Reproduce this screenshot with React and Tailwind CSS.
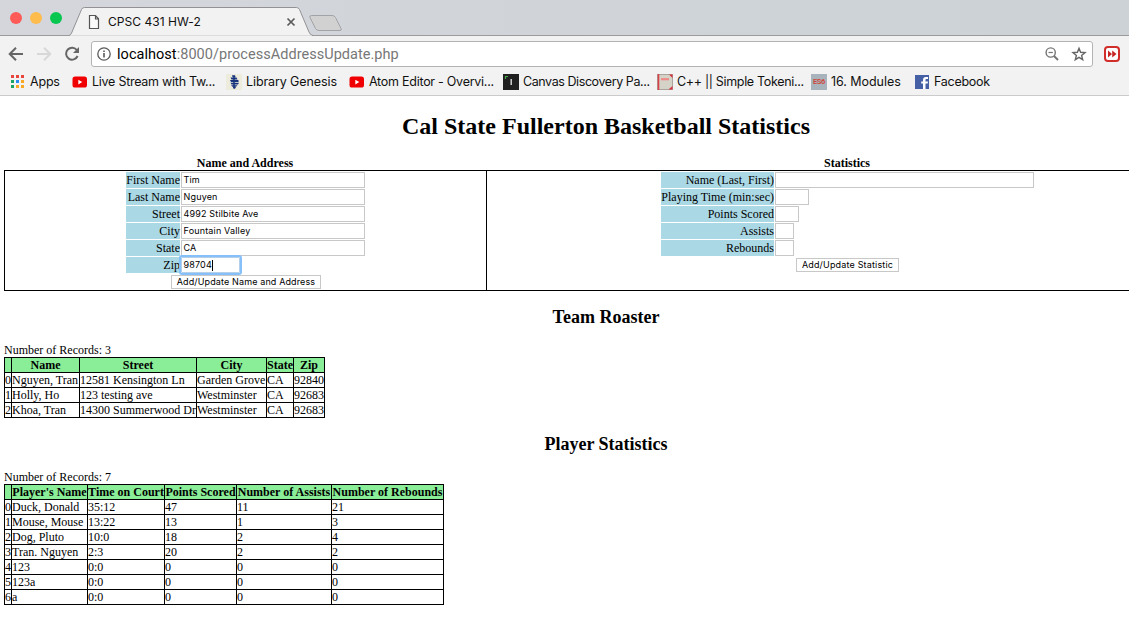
import React from "react";

const YouTube = () => (
  <svg className="h-4 w-4" viewBox="0 0 16 16">
    <rect x="0.500" y="2.500" width="14.500" height="11" rx="2.600" fill="#f00000" />
    <path d="M6.300 5.800v4.600l4-2.300z" fill="#fff" />
  </svg>
);

const AppsGrid = () => (
  <svg className="h-4 w-4" viewBox="0 0 16 16" shapeRendering="crispEdges">
    {[
      ["#e8453c", "#e8453c", "#e8453c"],
      ["#1ca261", "#2d8cf0", "#f9a825"],
      ["#1ca261", "#f9a825", "#f9a825"],
    ].map((row, y) =>
      row.map((c, x) => <rect key={x + "-" + y} x={1 + x * 5} y={1 + y * 5} width="3" height="3" fill={c} />)
    )}
  </svg>
);

const Genesis = () => (
  <svg className="h-4 w-4" viewBox="0 0 16 16">
    <rect width="16" height="16" fill="#ecebdc" />
    <path d="M6 1.300h3l.5 1.700H6.500zM4.500 3.500h6l1 1.900H5.500zM4 6.100h8.500v1.900H5zM4.500 8.700H13l-1 1.900H5.500zM5 11.300h6.500l-1.500 1.500H6.500zM7 13h3l-1 1.800H7.500z" fill="#17347c" />
    <path d="M8 2v12" stroke="#17347c" strokeWidth="1.500" />
  </svg>
);

const Canvas = () => (
  <svg className="h-4 w-4" viewBox="0 0 16 16">
    <rect width="16" height="16" fill="#202020" />
    <path d="M2.500 5V2.500H5" stroke="#4ca64c" strokeWidth="1.200" fill="none" />
    <path d="M8.200 5v6" stroke="#ddd" strokeWidth="1.400" />
  </svg>
);

const Book = () => (
  <svg className="h-4 w-4" viewBox="0 0 16 16">
    <rect width="16" height="16" fill="#aaa49c" />
    <path d="M1 1h12l2 2v12H1z" fill="#d5d2c8" />
    <path d="M1.500 0v16" stroke="#d8404a" strokeWidth="1.600" />
    <path d="M12 0.500h3.500v3.500zM15.500 12v3.500h-4z" fill="#d8303c" />
    <path d="M4 5.200h8" stroke="#ef8a86" strokeWidth="2.200" />
  </svg>
);

const Facebook = () => (
  <svg className="h-4 w-4" viewBox="0 0 16 16">
    <rect x="1" y="1" width="14" height="14" fill="#4560a5" />
    <path d="M9 15V9.600H7.200V7.400H9V6c0-2 1.100-3 2.800-3H14v2.100h-1.500c-.8 0-1 .4-1 1.100v1.200H14l-.3 2.200h-2.200V15z" fill="#fff" />
  </svg>
);

const Es6 = () => (
  <div className="flex h-4 w-4 items-center justify-center bg-[#a8b3bc] font-['Roboto',sans-serif] text-[7.5px] font-bold tracking-[-0.4px] text-[#cf4b3e]">
    ES6
  </div>
);

const bookmarks = [
  { icon: <AppsGrid />, label: "Apps", w: "w-[62px]", ls: "tracking-[-0.2px]" },
  { icon: <YouTube />, label: "Live Stream with Tw...", w: "w-[154px]", ls: "tracking-[-0.26px]" },
  { icon: <Genesis />, label: "Library Genesis", w: "w-[123px]", ls: "tracking-[-0.1px]" },
  { icon: <YouTube />, label: "Atom Editor - Overvi...", w: "w-[154px]", ls: "tracking-[-0.26px]" },
  { icon: <Canvas />, label: "Canvas Discovery Pa...", w: "w-[154px]", ls: "tracking-[-0.42px]" },
  { icon: <Book />, label: "C++ || Simple Tokeni...", w: "w-[154px]", ls: "tracking-[-0.32px]" },
  { icon: <Es6 />, label: "16. Modules", w: "w-[103px]", ls: "tracking-[-0.05px]" },
  { icon: <Facebook />, label: "Facebook", w: "w-[90px]", ls: "tracking-[-0.28px]" },
];

function TabStrip() {
  return (
    <div className="relative h-9 bg-linear-to-r from-[#d4d6dc] to-[#ccd2d6]">
      <svg className="absolute inset-0 h-9 w-full" width="1129" height="36" viewBox="0 0 1129 36">
        <path d="M0 35.500H1129" stroke="#9b9b9d" />
        <path d="M69 35.500Q71 35 72 32L81.500 9.500Q82.300 7.500 84.500 7.500H296.500Q298.500 7.500 299.500 9.500L309 32Q310.500 35.500 313 35.500" fill="#f2f2f2" stroke="#929294" />
        <path d="M70 36.500V35.500H312V36.500z" fill="#f2f2f2" />
        <path d="M311.500 15.500H332Q334.500 15.500 335.500 17.500L341 28.500Q342 30.500 340 30.500H319Q316.500 30.500 315.500 28.500L310 17.500Q309 15.500 311.500 15.500z" fill="#d1d1d1" stroke="#a2a3a6" />
        <circle cx="16" cy="18" r="6" fill="#fc5b57" />
        <circle cx="36" cy="18" r="6" fill="#fdbc4c" />
        <circle cx="56" cy="18" r="6" fill="#08c751" />
        <path d="M89.500 15.500H95.500L98.500 18.800V28.500H89.500zM95.500 15.500V19H98.500" fill="#fafafa" stroke="#555" strokeWidth="1.200" />
        <path d="M287.500 18.500l7 7M294.500 18.500l-7 7" stroke="#5a5a5a" strokeWidth="1.700" />
      </svg>
      <div className="relative flex h-9 items-center pl-[108px] pt-[7px] font-['Inter',sans-serif] text-[12px] leading-none tracking-[0.04px] text-[#111]">
        CPSC 431 HW-2
      </div>
    </div>
  );
}

function Toolbar() {
  return (
    <div className="flex h-[31px] items-center bg-[#f2f2f2] pt-1">
      <svg className="h-7 w-[91px] shrink-0" viewBox="0 0 91 28" fill="none" strokeWidth="2">
        <path d="M23 14H10.500M16 7.700L9.700 14L16 20.300" stroke="#666" />
        <path d="M37 14H49.500M44 7.700L50.300 14L44 20.300" stroke="#d8d8d8" />
        <path d="M77 10.200A6 6 0 1 0 77.600 16" stroke="#666" />
        <path d="M79 7V13H73z" fill="#666" />
      </svg>
      <div className="flex h-[26px] w-[1002px] shrink-0 items-center rounded-[3px] border border-[#b3b3b3] bg-white">
        <svg className="ml-[5px] h-4 w-4" viewBox="0 0 16 16" fill="none" stroke="#5a5a5a">
          <circle cx="7" cy="8" r="6.200" strokeWidth="1.300" />
          <path d="M7 7v4.500M7 4.500v1.500" strokeWidth="1.600" />
        </svg>
        <div className="ml-1 flex-1 pt-[3px] font-['Roboto',sans-serif] text-[14.5px] leading-none tracking-[0.04px] text-[#777]">
          <span className="text-black">localhost</span>:8000/processAddressUpdate.php
        </div>
        <svg className="mr-[11px] h-4 w-4" viewBox="0 0 16 16" fill="none" stroke="#757575">
          <circle cx="6.700" cy="6.500" r="4.600" strokeWidth="1.400" />
          <path d="M4.500 6.500h4.400" strokeWidth="1.200" />
          <path d="M10 10l4 4" strokeWidth="2" />
        </svg>
        <svg className="mr-[5px] h-4 w-4" viewBox="0 0 16 16" fill="none" stroke="#666" strokeWidth="1.400">
          <path d="M8 2.300L9.600 6.300L14 6.600L10.600 9.400L11.700 13.700L8 11.300L4.300 13.700L5.400 9.400L2 6.600L6.400 6.300z" />
        </svg>
      </div>
      <svg className="ml-[11px] h-4 w-4 shrink-0" viewBox="0 0 16 16">
        <rect x="1" y="1" width="14" height="14" rx="3" fill="#fff" stroke="#cf2e2b" strokeWidth="2" />
        <path d="M4 4.500L8 8L4 11.500zM8.200 4.500L12.500 8L8.200 11.500z" fill="#c62623" />
      </svg>
    </div>
  );
}

function Bookmarks() {
  return (
    <div className="flex h-[29px] items-center border-b border-[#cbcbcb] bg-[#f2f2f2] pl-2.5 pt-0.5 font-['Inter',sans-serif] text-[12.500px] text-[#111]">
      {bookmarks.map((b) => (
        <div key={b.label} className={`flex shrink-0 items-center gap-1 whitespace-nowrap ${b.w}`}>
          <div className="shrink-0">{b.icon}</div>
          <span className={`leading-4 ${b.ls}`}>{b.label}</span>
        </div>
      ))}
    </div>
  );
}

function Field({ label, labelWidth, width, value, focused }) {
  return (
    <div className="flex h-4 items-stretch gap-px">
      <div className={`shrink-0 whitespace-nowrap bg-[#abd8e5] text-right leading-4 ${labelWidth}`}>{label}</div>
      <div
        className={`flex items-center border bg-white pl-[1.5px] font-['Inter',sans-serif] text-[9px] tracking-[0.17px] ${width} ${
          focused ? "rounded-[1px] border-[#b5cfe8] outline-2 outline-[#85c0fa]" : "border-[#c8c8c8]"
        }`}
      >
        {value}
        {focused && <span className="h-[11px] w-px bg-black" />}
      </div>
    </div>
  );
}

function Button({ children, className }) {
  return (
    <button
      className={`flex h-3.5 items-center justify-center whitespace-nowrap border border-[#c8c8c8] bg-white pb-px font-['Inter',sans-serif] text-[9px] leading-none ${className}`}
    >
      {children}
    </button>
  );
}

function DataTable({ headers, rows, widths }) {
  return (
    <table className="table-fixed border-separate border-spacing-0 border-l border-t border-black leading-[14px]">
      <thead>
        <tr className="h-[15px] bg-[#8aee98]">
          {headers.map((h, i) => (
            <th key={i} className="border-b border-r border-black p-0 font-bold">
              <div className={`flex h-3.5 justify-center whitespace-nowrap ${widths[i]}`}>{h}</div>
            </th>
          ))}
        </tr>
      </thead>
      <tbody>
        {rows.map((r, y) => (
          <tr key={y} className="h-[15px]">
            {r.map((c, i) => (
              <td key={i} className="border-b border-r border-black p-0">
                <div className={`h-3.5 whitespace-nowrap ${widths[i]}`}>{c}</div>
              </td>
            ))}
          </tr>
        ))}
      </tbody>
    </table>
  );
}

export default function App() {
  return (
    <div className="h-[642px] w-full overflow-hidden bg-white">
      <TabStrip />
      <Toolbar />
      <Bookmarks />
      <main className="w-[1208px] pl-1 font-['Liberation_Serif',serif] text-[12px] leading-[14px] text-black">
        <h1 className="pt-4 text-center text-[24px] font-bold leading-7">Cal State Fullerton Basketball Statistics</h1>
        <div className="mt-4 flex h-3.5 font-bold">
          <div className="w-[482px] text-center">Name and Address</div>
          <div className="w-[722px] text-center">Statistics</div>
        </div>
        <div className="flex h-[121px] border border-black">
          <div className="w-[482px] border-r border-black pl-[121px] pt-px">
            <div className="flex flex-col gap-px">
              <Field label="First Name" labelWidth="w-[54px]" width="w-[184px]" value="Tim" />
              <Field label="Last Name" labelWidth="w-[54px]" width="w-[184px]" value="Nguyen" />
              <Field label="Street" labelWidth="w-[54px]" width="w-[184px]" value="4992 Stilbite Ave" />
              <Field label="City" labelWidth="w-[54px]" width="w-[184px]" value="Fountain Valley" />
              <Field label="State" labelWidth="w-[54px]" width="w-[184px]" value="CA" />
              <Field label="Zip" labelWidth="w-[54px]" width="w-[59px]" value="98704" focused />
            </div>
            <Button className="ml-[45px] mt-0.5 w-[150px] tracking-[0.13px]">Add/Update Name and Address</Button>
          </div>
          <div className="pl-[174px] pt-px">
            <div className="flex flex-col gap-px">
              <Field label="Name (Last, First)" labelWidth="w-[113px]" width="w-[259px]" />
              <Field label="Playing Time (min:sec)" labelWidth="w-[113px]" width="w-[34px]" />
              <Field label="Points Scored" labelWidth="w-[113px]" width="w-[24px]" />
              <Field label="Assists" labelWidth="w-[113px]" width="w-[19px]" />
              <Field label="Rebounds" labelWidth="w-[113px]" width="w-[19px]" />
            </div>
            <Button className="ml-[135px] mt-0.5 w-[103px] tracking-[0.17px]">Add/Update Statistic</Button>
          </div>
        </div>
        <h2 className="mt-4 text-center text-[18px] font-bold leading-[21px]">Team Roaster</h2>
        <div className="mt-[15px]">Number of Records: 3</div>
        <DataTable
          headers={["", "Name", "Street", "City", "State", "Zip"]}
          widths={["w-[6px]", "w-[67px]", "w-[116px]", "w-[69px]", "w-[26px]", "w-[30px]"]}
          rows={[
            ["0", "Nguyen, Tran", "12581 Kensington Ln", "Garden Grove", "CA", "92840"],
            ["1", "Holly, Ho", "123 testing ave", "Westminster", "CA", "92683"],
            ["2", "Khoa, Tran", "14300 Summerwood Dr", "Westminster", "CA", "92683"],
          ]}
        />
        <h2 className="mt-4 text-center text-[18px] font-bold leading-[21px]">Player Statistics</h2>
        <div className="mt-[15px]">Number of Records: 7</div>
        <DataTable
          headers={["", "Player's Name", "Time on Court", "Points Scored", "Number of Assists", "Number of Rebounds"]}
          widths={["w-[6px]", "w-[75px]", "w-[76px]", "w-[71px]", "w-[94px]", "w-[111px]"]}
          rows={[
            ["0", "Duck, Donald", "35:12", "47", "11", "21"],
            ["1", "Mouse, Mouse", "13:22", "13", "1", "3"],
            ["2", "Dog, Pluto", "10:0", "18", "2", "4"],
            ["3", "Tran. Nguyen", "2:3", "20", "2", "2"],
            ["4", "123", "0:0", "0", "0", "0"],
            ["5", "123a", "0:0", "0", "0", "0"],
            ["6", "a", "0:0", "0", "0", "0"],
          ]}
        />
      </main>
    </div>
  );
}
